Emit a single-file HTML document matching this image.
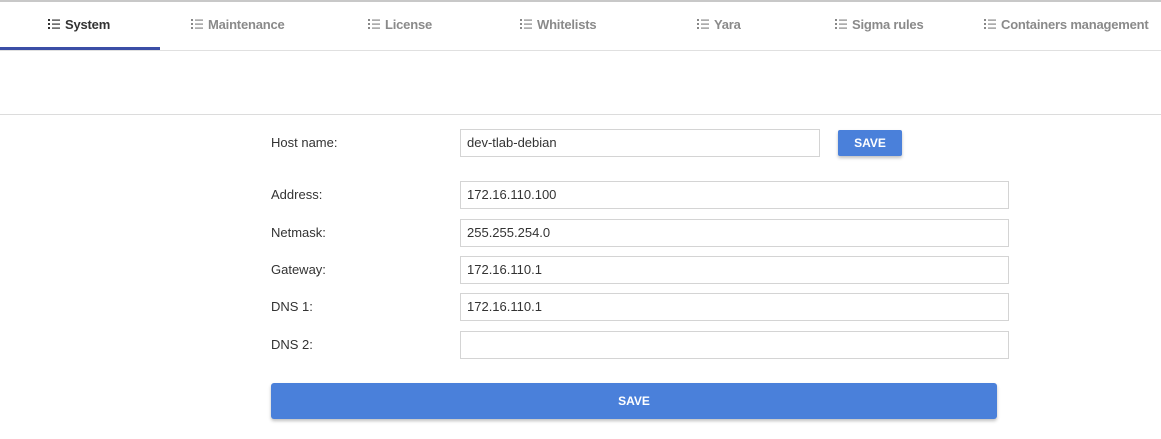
<!DOCTYPE html><html><head><style>
body{margin:0;width:1161px;height:439px;background:#fff;font-family:"Liberation Sans",sans-serif;position:relative;overflow:hidden}
.top{position:absolute;left:0;top:0;width:1161px;height:2px;background:#c8c8c8}
.tab{position:absolute;top:17px;font-size:13px;font-weight:bold;color:#8a8a8a;white-space:nowrap;letter-spacing:-0.2px}
.tab.a{color:#333}
.ic{display:inline-block;vertical-align:-1px;margin-right:5px}
.l1{position:absolute;left:0;top:50px;width:1161px;height:1px;background:#e0e0e0}
.ul{position:absolute;left:0;top:47px;width:160px;height:3px;background:#3b4ea6}
.l2{position:absolute;left:0;top:114px;width:1161px;height:1px;background:#dcdcdc}
.lb{position:absolute;left:271px;font-size:13px;color:#333}
.in{position:absolute;left:460px;width:549px;border:1px solid #d4d4d4;font-size:13px;color:#333;line-height:26px;padding-left:6px;box-sizing:border-box;height:28px}
.btn{position:absolute;background:#4a80da;color:#fff;font-weight:bold;font-size:12px;text-align:center;border-radius:2px;box-shadow:0 2px 3px rgba(0,0,0,.25)}
</style></head><body>
<div class="top"></div>
<svg width="0" height="0" style="position:absolute"><defs><g id="li"><rect x="0" y="1" width="2" height="2"/><rect x="0" y="5" width="2" height="2"/><rect x="0" y="9" width="2" height="2"/><rect x="4" y="1.5" width="8" height="1.2"/><rect x="4" y="5.5" width="8" height="1.2"/><rect x="4" y="9.5" width="8" height="1.2"/></g></defs></svg>
<div class="tab a" style="left:48px"><svg class="ic" width="12" height="12" fill="#333"><use href="#li"/></svg>System</div>
<div class="tab" style="left:191px"><svg class="ic" width="12" height="12" fill="#888"><use href="#li"/></svg>Maintenance</div>
<div class="tab" style="left:368px"><svg class="ic" width="12" height="12" fill="#888"><use href="#li"/></svg>License</div>
<div class="tab" style="left:520px"><svg class="ic" width="12" height="12" fill="#888"><use href="#li"/></svg>Whitelists</div>
<div class="tab" style="left:697px"><svg class="ic" width="12" height="12" fill="#888"><use href="#li"/></svg>Yara</div>
<div class="tab" style="left:835px"><svg class="ic" width="12" height="12" fill="#888"><use href="#li"/></svg>Sigma rules</div>
<div class="tab" style="left:984px"><svg class="ic" width="12" height="12" fill="#888"><use href="#li"/></svg>Containers management</div>
<div class="l1"></div><div class="ul"></div><div class="l2"></div>
<div class="lb" style="top:135px">Host name:</div>
<div class="in" style="top:129px;width:360px">dev-tlab-debian</div>
<div class="btn" style="left:838px;top:130px;width:64px;height:26px;line-height:26px">SAVE</div>
<div class="lb" style="top:187px">Address:</div><div class="in" style="top:181px">172.16.110.100</div>
<div class="lb" style="top:225px">Netmask:</div><div class="in" style="top:219px">255.255.254.0</div>
<div class="lb" style="top:262px">Gateway:</div><div class="in" style="top:256px">172.16.110.1</div>
<div class="lb" style="top:299px">DNS 1:</div><div class="in" style="top:293px">172.16.110.1</div>
<div class="lb" style="top:337px">DNS 2:</div><div class="in" style="top:331px"></div>
<div class="btn" style="left:271px;top:383px;width:726px;height:36px;line-height:36px;border-radius:3px">SAVE</div>
</body></html>
